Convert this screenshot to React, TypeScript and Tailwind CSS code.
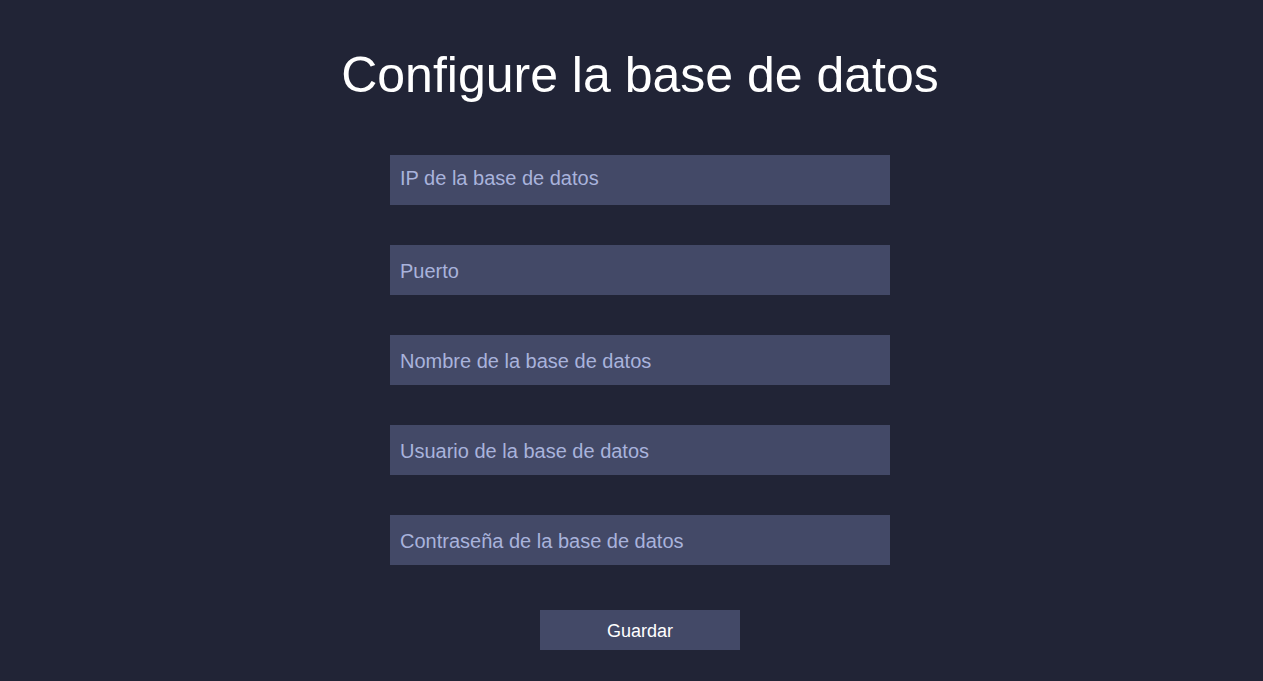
const fields = [
  { id: "host", label: "IP de la base de datos", type: "text", pad: "pb-1" },
  { id: "port", label: "Puerto", type: "text", pad: "pt-0.5" },
  { id: "name", label: "Nombre de la base de datos", type: "text", pad: "pt-0.5" },
  { id: "user", label: "Usuario de la base de datos", type: "text", pad: "pt-0.5" },
  { id: "password", label: "Contraseña de la base de datos", type: "password", pad: "pt-0.5" },
];

export default function App() {
  return (
    <main className="min-h-screen bg-[#212436] pt-[45px] pb-[31px] pl-[17px] font-['Liberation_Sans',Arial,sans-serif] text-white">
      <form className="flex flex-col items-center" onSubmit={(e) => e.preventDefault()}>
        <h1 className="text-center text-[50px] leading-[60px]">Configure la base de datos</h1>
        <div className="mt-[50px] flex w-full max-w-[500px] flex-col gap-10">
          {fields.map((f) => (
            <input
              key={f.id}
              id={f.id}
              name={f.id}
              type={f.type}
              aria-label={f.label}
              placeholder={f.label}
              className={`h-[50px] w-full bg-[#434967] px-2.5 text-[20px] outline-none placeholder:text-[#a9b3dc] ${f.pad}`}
            />
          ))}
        </div>
        <button type="submit" className="mt-[45px] h-10 w-[200px] bg-[#434967] pt-0.5 text-[18px]">
          Guardar
        </button>
      </form>
    </main>
  );
}
